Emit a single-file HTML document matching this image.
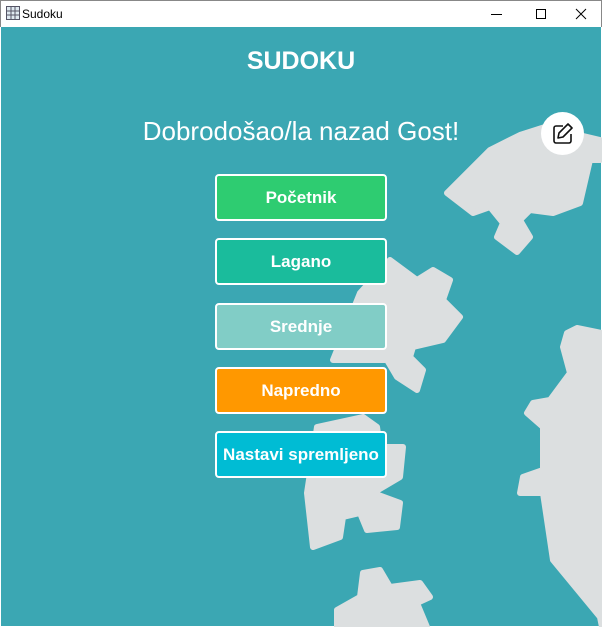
<!DOCTYPE html>
<html><head><style>
*{margin:0;padding:0;box-sizing:border-box}
body{width:602px;height:627px;overflow:hidden;background:#fff;font-family:"Liberation Sans",sans-serif;position:relative}
.tb{position:absolute;left:0;top:0;width:602px;height:27px;background:#fff;border:1px solid #888;border-bottom:none}
.tb span{position:absolute;left:21px;top:6px;font-size:12px;color:#000}
.main{position:absolute;left:1px;top:27px;width:600px;height:599px;background:#3ba7b3;overflow:hidden}
svg.bg{position:absolute;left:0;top:0}
h1{position:absolute;left:0;width:602px;top:47px;text-align:center;color:#fff;font-size:25px;font-weight:bold;font-family:"Liberation Sans",sans-serif}
.w{position:absolute;left:0;width:602px;top:116px;text-align:center;color:#fff;font-size:26px;font-family:"Liberation Sans",sans-serif}
.b{position:absolute;left:215px;width:172px;height:47px;border:2px solid #fff;border-radius:4px;color:#fff;font-weight:bold;font-size:17px;text-align:center;line-height:43px}
.ed{position:absolute;left:541px;top:112px;width:43px;height:43px;border-radius:50%;background:#fff}
</style></head><body>
<div class="tb">
<svg style="position:absolute;left:5px;top:5px" width="14" height="14" viewBox="0 0 14 14"><rect x=".5" y=".5" width="13" height="13" fill="#dfe9f0" stroke="#556"/><path d="M5 .5V13.5M9 .5V13.5M.5 5H13.5M.5 9H13.5" stroke="#556"/></svg>
<span>Sudoku</span>
<svg style="position:absolute;left:480px;top:6px" width="110" height="14"><path d="M10 7.5H21" stroke="#000"/><rect x="55.5" y="2.5" width="9" height="9" fill="none" stroke="#000"/><path d="M95 2L105 12M105 2L95 12" stroke="#000"/></svg>
</div>
<div class="main"></div>
<svg class="bg" width="602" height="627" viewBox="0 0 602 627">
<g fill="#dcdfe0" stroke="#dcdfe0" stroke-width="6" stroke-linejoin="round">
<path d="M447 193L490 150L520 135L545 127L600 140L600 160L590 160L580 203L553 213L530 210L520 220L530 237L517 252L497 237L503 223L490 207L473 213Z"/>
<path d="M390 260L417 280L433 270L450 280L443 300L460 317L443 340L413 347L410 357L423 370L417 390L397 377L387 360L333 360L360 293Z"/>
<path d="M317 427L363 417L377 427L380 447L403 447L400 477L373 493L400 503L397 527L367 530L360 513L343 517L340 537L313 547L307 493Z"/>
<path d="M567 333L577 328L602 333L602 627L600 617L553 560L543 493L520 493L523 477L543 470L543 427L527 413L533 403L550 400L570 373L563 347Z"/>
<path d="M363 573L380 570L390 587L420 583L430 597L417 603L427 627L337 627L337 610L360 597Z"/>
</g>
</svg>
<h1>SUDOKU</h1>
<div class="w">Dobrodošao/la nazad Gost!</div>
<div class="ed"><svg width="43" height="43" viewBox="0 0 43 43"><path d="M22 14H15a2 2 0 0 0-2 2v13a2 2 0 0 0 2 2h13a2 2 0 0 0 2-2v-7" fill="none" stroke="#111" stroke-width="1.6"/><path d="M27 12l4 4-9 9-5 1 1-5z" fill="none" stroke="#111" stroke-width="1.6" stroke-linejoin="round"/></svg></div>
<div class="b" style="top:174px;background:#2ecc71">Početnik</div>
<div class="b" style="top:238px;background:#1abc9c">Lagano</div>
<div class="b" style="top:303px;background:#81cdc6">Srednje</div>
<div class="b" style="top:367px;background:#ff9800">Napredno</div>
<div class="b" style="top:431px;background:#00bcd4">Nastavi spremljeno</div>
</body></html>
